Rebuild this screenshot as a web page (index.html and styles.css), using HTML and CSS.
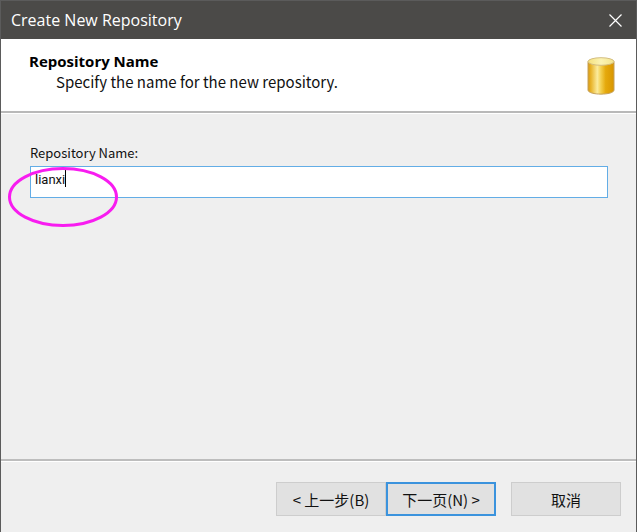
FILE: index.html
```
<!DOCTYPE html>
<html lang="en">
<head>
    <meta charset="UTF-8">
    <meta name="viewport" content="width=device-width, initial-scale=1.0">
    <title>Create New Repository</title>
    <link rel="stylesheet" href="styles.css">
</head>
<body>
    <form class="dialog">
        <div class="titlebar">
            <span class="title">Create New Repository</span>
            <button type="button" class="close" aria-label="Close">
                <svg width="13" height="13" viewBox="0 0 13 13">
                    <path d="M0.5 0.5 L12.5 12.5 M12.5 0.5 L0.5 12.5" stroke="#fff" stroke-width="1.2" fill="none"/>
                </svg>
            </button>
        </div>
        <div class="header">
            <div class="header-text">
                <h1>Repository Name</h1>
                <p>Specify the name for the new repository.</p>
            </div>
            <svg class="db-icon" width="28" height="38" viewBox="0 0 28 38">
                <defs>
                    <linearGradient id="side" x1="0" x2="1" y1="0" y2="0">
                        <stop offset="0" stop-color="#d99a12"/>
                        <stop offset="0.12" stop-color="#e9b52c"/>
                        <stop offset="0.36" stop-color="#fbeb9c"/>
                        <stop offset="0.5" stop-color="#f3cf4e"/>
                        <stop offset="0.68" stop-color="#e5a90c"/>
                        <stop offset="1" stop-color="#d89500"/>
                    </linearGradient>
                    <linearGradient id="top" x1="0" x2="1" y1="0" y2="0">
                        <stop offset="0" stop-color="#f5e17c"/>
                        <stop offset="0.5" stop-color="#fbf3b4"/>
                        <stop offset="1" stop-color="#f3e48c"/>
                    </linearGradient>
                </defs>
                <path d="M1 4.5 V33 C1 38.5 27 38.5 27 33 V4.5 Z" fill="url(#side)" stroke="#c4a05a" stroke-width="1"/>
                <ellipse cx="14" cy="4.5" rx="13" ry="3.8" fill="url(#top)" stroke="#d3bd80" stroke-width="1"/>
            </svg>
        </div>
        <div class="content">
            <label for="repoName">Repository Name:</label>
            <div class="field">
                <input type="text" id="repoName" name="repoName" value="lianxi">
                <span class="caret"></span>
                <svg class="marker" width="112" height="62" viewBox="0 0 112 62">
                    <ellipse cx="56" cy="31" rx="53.5" ry="28.5" fill="none" stroke="#f81cf0" stroke-width="3"/>
                </svg>
            </div>
        </div>
        <div class="footer">
            <button type="button">&lt; 上一步(B)</button>
            <button type="submit" class="default">下一页(N) &gt;</button>
            <button type="button" class="cancel">取消</button>
        </div>
    </form>
</body>
</html>
```
FILE: styles.css
```
* {
    box-sizing: border-box;
}
body {
    margin: 0;
    font-family: "Noto Sans CJK SC", "Noto Sans", sans-serif;
    color: #111;
}
.dialog {
    display: flex;
    flex-direction: column;
    min-height: 100vh;
    background-color: #efefef;
    border-left: 1px solid #5b5b5b;
    border-right: 1px solid #5b5b5b;
}
.titlebar {
    display: flex;
    align-items: center;
    justify-content: space-between;
    height: 39px;
    padding: 0 14px 0 10px;
    background-color: #4b4a48;
    border-top: 1px solid #5b5b5b;
    color: #fff;
    font-family: "Open Sans", sans-serif;
    font-size: 16px;
}
.close {
    display: flex;
    padding: 0;
    border: none;
    background: none;
}
.header {
    display: flex;
    justify-content: space-between;
    padding: 12px 21px 16px 28px;
    background-color: #fff;
    border-bottom: 2px solid #b9b9b9;
}
.header h1 {
    margin: 0;
    font-family: "Open Sans", sans-serif;
    font-size: 15px;
    line-height: 20px;
    color: #000;
}
.header p {
    margin: 0 0 0 27px;
    font-size: 15px;
    line-height: 22px;
}
.db-icon {
    margin-top: 6px;
}
.content {
    flex: 1;
    padding: 29px 28px 0 29px;
    border-top: 1px solid #fff;
}
label {
    display: block;
    margin-bottom: 3px;
    font-size: 13px;
    line-height: 20px;
}
.field {
    position: relative;
}
input[type="text"] {
    display: block;
    width: 100%;
    height: 32px;
    padding: 0 4px 6px;
    border: 1px solid #63ade6;
    background-color: #fff;
    font-family: Roboto, sans-serif;
    font-size: 13px;
    color: #111;
    outline: none;
}
.caret {
    position: absolute;
    left: 35px;
    top: 4px;
    width: 1px;
    height: 17px;
    background-color: #000;
}
.marker {
    position: absolute;
    left: -23px;
    top: 0;
}
.footer {
    display: flex;
    justify-content: flex-end;
    padding: 21px 15px 16px;
    border-top: 2px solid #bdbdbd;
    box-shadow: inset 0 1px #fff;
}
.footer button {
    width: 110px;
    height: 34px;
    padding: 0;
    border: 1px solid #cdcdcd;
    background-color: #e1e1e1;
    font-family: inherit;
    font-size: 15px;
    color: #111;
}
.footer .default {
    border: 2px solid #3b93dd;
}
.footer .cancel {
    margin-left: 15px;
}
```
